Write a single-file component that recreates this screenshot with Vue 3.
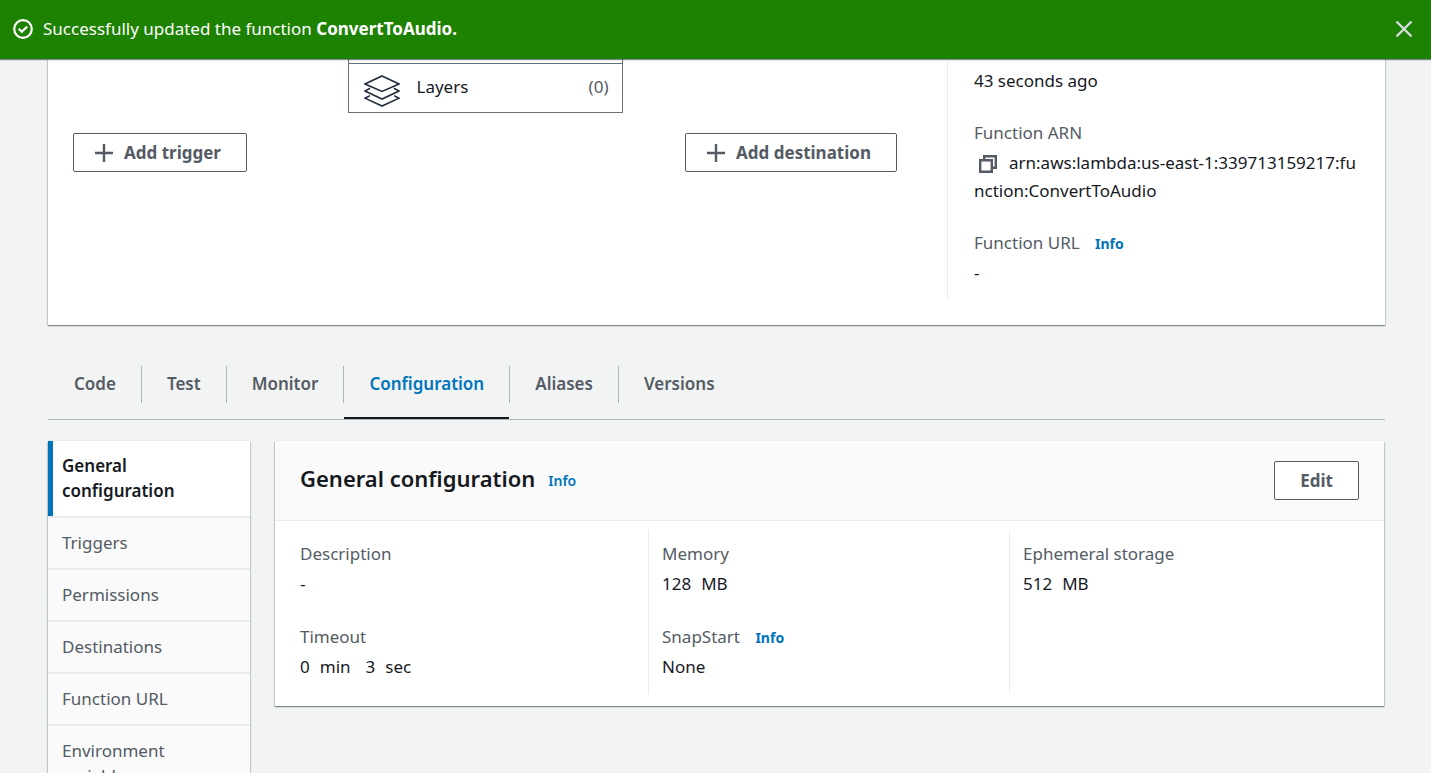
<script setup>
import { ref } from 'vue'

const showBanner = ref(true)
const activeTab = ref('Configuration')
const activeSection = ref('General configuration')

const tabs = ['Code', 'Test', 'Monitor', 'Configuration', 'Aliases', 'Versions']
const sections = [
  'General configuration',
  'Triggers',
  'Permissions',
  'Destinations',
  'Function URL',
  'Environment variables',
]
const columns = [
  [
    { label: 'Description', parts: [['-']] },
    { label: 'Timeout', parts: [['0', 'min'], ['3', 'sec']] },
  ],
  [
    { label: 'Memory', parts: [['128', 'MB']] },
    { label: 'SnapStart', info: true, parts: [['None']] },
  ],
  [{ label: 'Ephemeral storage', parts: [['512', 'MB']] }],
]
</script>

<template>
  <div class="page">
    <div v-if="showBanner" class="banner" role="status">
      <svg class="check" viewBox="0 0 20 20" aria-hidden="true">
        <circle cx="10" cy="10" r="8.8" />
        <path d="M5.800 9.800l3 3 5.400-5.200" />
      </svg>
      <p class="message">Successfully updated the function <strong>ConvertToAudio.</strong></p>
      <button class="close" type="button" aria-label="Dismiss" @click="showBanner = false">
        <svg viewBox="0 0 18 18" aria-hidden="true"><path d="M1.500 1.500l15 15M16.500 1.500l-15 15" /></svg>
      </button>
    </div>

    <main class="content">
      <section class="card overview">
        <div class="designer">
          <div class="function-box">
            <button class="layers" type="button">
              <svg class="stack" viewBox="0 0 36 32" aria-hidden="true">
                <path d="M18 1L35 9 18 16.500 1 9z" />
                <path d="M6 13.200L1 16l17 8 17-8-5-2.800" />
                <path d="M6 20.600L1 23.200l17 7.800 17-7.800-5-2.600" />
              </svg>
              <span>Layers</span>
              <span class="count">(0)</span>
            </button>
          </div>
          <div class="actions">
            <button class="btn" type="button">
              <svg class="plus" viewBox="0 0 18 18" aria-hidden="true"><path d="M9 0v18M0 9h18" /></svg>
              Add trigger
            </button>
            <button class="btn" type="button">
              <svg class="plus" viewBox="0 0 18 18" aria-hidden="true"><path d="M9 0v18M0 9h18" /></svg>
              Add destination
            </button>
          </div>
        </div>

        <div class="details">
          <p class="value">43 seconds ago</p>
          <dl class="field">
            <dt>Function ARN</dt>
            <dd class="value arn">
              <button class="copy" type="button" aria-label="Copy ARN">
                <svg viewBox="0 0 18 18" aria-hidden="true">
                  <path d="M1.200 5.200h11.600v11.600H1.200z" />
                  <path d="M5.200 5V1.200h11.600v11.600H13" />
                </svg>
              </button>arn:aws:lambda:us-east-1:339713159217:function:ConvertToAudio
            </dd>
          </dl>
          <dl class="field">
            <dt>Function URL <a class="info" href="#url">Info</a></dt>
            <dd class="value">-</dd>
          </dl>
        </div>
      </section>

      <ul class="tabs" role="tablist">
        <li v-for="tab in tabs" :key="tab" role="presentation">
          <button
            type="button"
            role="tab"
            class="tab"
            :class="{ active: tab === activeTab }"
            :aria-selected="tab === activeTab"
            @click="activeTab = tab"
          >{{ tab }}</button>
        </li>
      </ul>

      <div class="configuration">
        <nav class="side card" aria-label="Configuration sections">
          <a
            v-for="section in sections"
            :key="section"
            href="#section"
            :class="{ active: section === activeSection }"
            @click.prevent="activeSection = section"
          >{{ section }}</a>
        </nav>

        <section class="card general">
          <header class="general-head">
            <h2>General configuration</h2>
            <a class="info" href="#general">Info</a>
            <button class="btn edit" type="button">Edit</button>
          </header>
          <div class="columns">
            <div v-for="(column, i) in columns" :key="i" class="column">
              <dl v-for="item in column" :key="item.label" class="field">
                <dt>{{ item.label }} <a v-if="item.info" class="info" href="#snapstart">Info</a></dt>
                <dd class="value parts">
                  <span v-for="part in item.parts" :key="part[0]" class="part">
                    <span v-for="word in part" :key="word">{{ word }}</span>
                  </span>
                </dd>
              </dl>
            </div>
          </div>
        </section>
      </div>
    </main>
  </div>
</template>

<style>
body {
  margin: 0;
  background: #f2f3f3;
}
</style>

<style scoped>
* {
  box-sizing: border-box;
}
.page {
  height: 100vh;
  overflow: hidden;
  background: #f2f3f3;
  color: #16191f;
  font: 400 17px/25px 'Noto Sans', 'Open Sans', sans-serif;
}
button {
  margin: 0;
  padding: 0;
  border: 0;
  background: none;
  font: inherit;
  color: inherit;
  cursor: pointer;
}
a {
  text-decoration: none;
}
p,
h2,
ul,
dl,
dd {
  margin: 0;
  padding: 0;
}
svg {
  display: block;
  fill: none;
  stroke: currentColor;
  stroke-width: 2;
}

.banner {
  position: relative;
  z-index: 1;
  display: flex;
  align-items: center;
  height: 59px;
  padding: 0 18px 2px 13px;
  background: #1d8102;
  color: #fff;
  box-shadow: 0 1px 1px rgba(0, 28, 36, 0.5);
}
.check {
  width: 20px;
  height: 20px;
  margin-right: 10px;
  stroke-width: 2.2;
}
.message {
  flex: 1;
}
.message strong {
  font-weight: 700;
}
.close {
  color: #d5dbdb;
}
.close svg {
  width: 18px;
  height: 18px;
  stroke-width: 2.4;
}

.content {
  padding: 0 46px 0 48px;
}
.card {
  background: #fff;
  box-shadow: 0 -1px 0 #eaeded, 0 1px 1px rgba(0, 28, 36, 0.3), 1px 1px 1px rgba(0, 28, 36, 0.15),
    -1px 1px 1px rgba(0, 28, 36, 0.15);
}

.overview {
  display: flex;
  padding-bottom: 25px;
}
.designer {
  flex: 1;
  display: flex;
  flex-direction: column;
  align-items: center;
  gap: 20px;
  padding: 0 50px 0 25px;
}
.function-box {
  width: 275px;
  padding-top: 4px;
  border: 1px solid #687078;
  border-top: 0;
}
.layers {
  display: flex;
  align-items: center;
  width: 100%;
  height: 49px;
  padding: 0 13px 4px 15px;
  border-top: 1px solid #687078;
}
.stack {
  width: 36px;
  height: 32px;
  margin: 9px 17px 0 0;
  color: #232f3e;
  stroke-width: 1.6;
}
.count {
  margin-left: auto;
  color: #545b64;
}
.actions {
  display: flex;
  justify-content: space-between;
  width: 100%;
}
.btn {
  display: flex;
  align-items: center;
  height: 39px;
  padding: 0 25px 1px 21px;
  border: 1px solid #545b64;
  border-radius: 2px;
  background: #fff;
  color: #545b64;
  font-weight: 700;
}
.plus {
  width: 18px;
  height: 18px;
  margin: 1px 11px 0 0;
  stroke-width: 2.4;
}

.details {
  width: 438px;
  padding: 8px 24px 13px 26px;
  border-left: 1px solid #eaeded;
}
.field {
  margin-top: 23px;
}
.field dt {
  line-height: 30px;
  color: #545b64;
}
.value {
  line-height: 28px;
}
.field .value {
  margin-top: 1px;
}
.arn {
  word-break: break-all;
}
.copy {
  display: inline-block;
  margin: 0 12px 0 5px;
  vertical-align: -4px;
  color: #545b64;
}
.copy svg {
  width: 18px;
  height: 18px;
  stroke-width: 2.4;
}
.info {
  margin-left: 11px;
  font-size: 14px;
  line-height: 20px;
  font-weight: 700;
  color: #0073bb;
}

.tabs {
  display: flex;
  margin-top: 41px;
  border-bottom: 1px solid #aab7b8;
  list-style: none;
}
.tabs li {
  display: flex;
  align-items: flex-start;
}
.tabs li:not(:last-child)::after {
  content: '';
  width: 1px;
  height: 37px;
  background: #aab7b8;
}
.tab {
  height: 53px;
  padding: 0 25px 16px;
  border-bottom: 2px solid transparent;
  line-height: 35px;
  font-weight: 600;
  color: #545b64;
}
.tabs li:first-child .tab {
  padding-left: 26px;
}
.tab.active {
  border-color: #16191f;
  color: #0073bb;
}

.configuration {
  display: flex;
  align-items: flex-start;
  gap: 25px;
  margin-top: 21px;
  padding-right: 1px;
}
.side {
  width: 202px;
}
.side a {
  display: block;
  padding: 12px 40px 13px 14px;
  border-bottom: 2px solid #eaeded;
  background: #fafafa;
  color: #545b64;
}
.side a.active {
  position: relative;
  background: #fff;
  color: #16191f;
  font-weight: 600;
}
.side a.active::before {
  content: '';
  position: absolute;
  inset: 0 auto 0 0;
  width: 5px;
  background: #0073bb;
}

.general {
  flex: 1;
}
.general-head {
  display: flex;
  align-items: center;
  height: 80px;
  padding: 0 25px;
  border-bottom: 1px solid #eaeded;
  background: #fafafa;
}
.general-head h2 {
  padding-bottom: 6px;
  font-size: 22px;
  line-height: 30px;
  font-weight: 600;
}
.general-head .info {
  margin-left: 13px;
  font-weight: 600;
}
.edit {
  margin-left: auto;
  padding: 0 25px 1px;
}
.columns {
  display: grid;
  grid-template-columns: repeat(3, 1fr);
  padding: 9px 14px 12px 12px;
}
.column {
  padding: 9px 12px 13px 13px;
  border-left: 1px solid #eaeded;
}
.column:first-child {
  border-left: 0;
}
.column .field:first-child {
  margin-top: 0;
}
.column .field + .field {
  margin-top: 24px;
}
.parts {
  display: flex;
  gap: 15px;
}
.part {
  display: flex;
  gap: 10px;
}
</style>
